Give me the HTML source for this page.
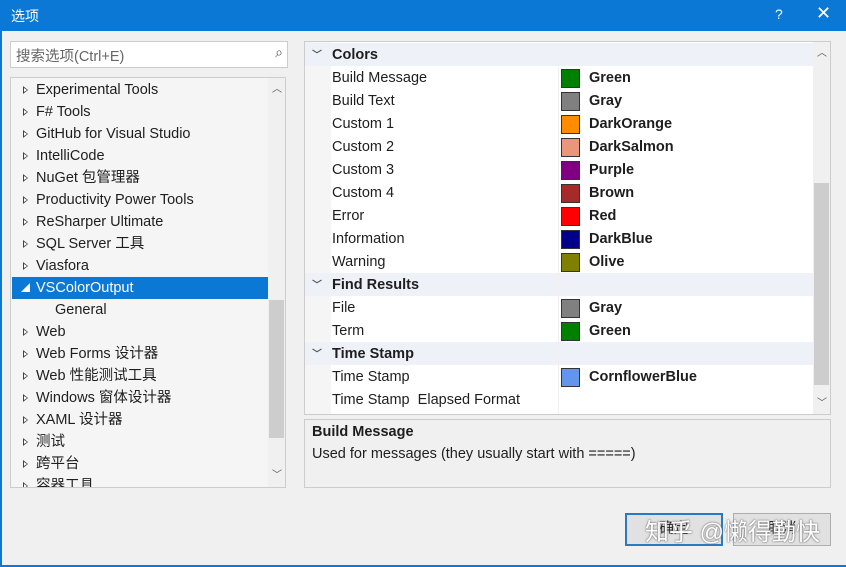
<!DOCTYPE html><html><head><meta charset="utf-8"><style>
*{margin:0;padding:0;box-sizing:border-box}
body{width:846px;height:567px;background:#f0f0f0;font-family:"Segoe UI","Liberation Sans","Noto Sans CJK SC",sans-serif;font-size:14.5px;color:#1e1e1e;position:relative;overflow:hidden}
.a{position:absolute}
#title{left:0;top:0;width:846px;height:31px;background:#0b78d6;color:#fff}
.row{position:absolute;height:22px;line-height:22px;white-space:nowrap}
.tri{display:inline-block;width:0;height:0;border-left:5px solid #444;border-top:4px solid transparent;border-bottom:4px solid transparent;position:absolute;left:12px;top:7px}
.tri::after{content:"";position:absolute;left:-4px;top:-2.5px;border-left:3px solid #fff;border-top:2.5px solid transparent;border-bottom:2.5px solid transparent}
.g{position:absolute;left:0;width:508px;height:23px;line-height:25px;white-space:nowrap}
.cat{background:#eef1f7;font-weight:bold}
.sw{position:absolute;left:256px;top:3px;width:19px;height:19px;border:1px solid #333}
.v{position:absolute;left:284px;font-weight:bold}
.l{position:absolute;left:27px}
.chev{position:absolute;left:7px;top:0;font-size:10px;color:#555}
</style></head><body>
<div class="a" style="left:0;top:0;width:2px;height:567px;background:#0b78d6"></div>
<div class="a" id="title"><span class="a" style="left:11px;top:6px;font-size:14px">选项</span><span class="a" style="left:775px;top:6px;font-size:14px">?</span><span class="a" style="left:816px;top:3px;font-size:18px">✕</span></div>
<div class="a" style="left:10px;top:41px;width:278px;height:27px;background:#fff;border:1px solid #ccc"><span class="a" style="left:5px;top:3px;color:#666">搜索选项(Ctrl+E)</span><span class="a" style="right:4px;top:2px;color:#555;font-size:14px">&#x2315;</span></div>
<div class="a" style="left:10px;top:77px;width:276px;height:411px;background:#f5f5f5;border:1px solid #ccc;overflow:hidden">
<div class="a" style="left:257px;top:0;width:17px;height:409px;background:#f0f0f0"></div>
<div class="a" style="left:258px;top:222px;width:15px;height:138px;background:#cdcdcd"></div>
<div class="a" style="left:261px;top:2px;font-size:10px;color:#555">︿</div>
<div class="a" style="left:261px;top:388px;font-size:10px;color:#555">﹀</div>
<div class="a" style="left:1px;top:199px;width:256px;height:22px;background:#0b78d6"></div>
<div class="row" style="top:1px;left:0"><i class="tri"></i><span style="margin-left:25px">Experimental Tools</span></div>
<div class="row" style="top:23px"><i class="tri"></i><span style="margin-left:25px">F# Tools</span></div>
<div class="row" style="top:45px"><i class="tri"></i><span style="margin-left:25px">GitHub for Visual Studio</span></div>
<div class="row" style="top:67px"><i class="tri"></i><span style="margin-left:25px">IntelliCode</span></div>
<div class="row" style="top:89px"><i class="tri"></i><span style="margin-left:25px">NuGet 包管理器</span></div>
<div class="row" style="top:111px"><i class="tri"></i><span style="margin-left:25px">Productivity Power Tools</span></div>
<div class="row" style="top:133px"><i class="tri"></i><span style="margin-left:25px">ReSharper Ultimate</span></div>
<div class="row" style="top:155px"><i class="tri"></i><span style="margin-left:25px">SQL Server 工具</span></div>
<div class="row" style="top:177px"><i class="tri"></i><span style="margin-left:25px">Viasfora</span></div>
<div class="row" style="top:199px;color:#fff"><span style="position:absolute;left:10px;font-size:9px">◢</span><span style="margin-left:25px">VSColorOutput</span></div>
<div class="row" style="top:221px"><span style="margin-left:44px">General</span></div>
<div class="row" style="top:243px"><i class="tri"></i><span style="margin-left:25px">Web</span></div>
<div class="row" style="top:265px"><i class="tri"></i><span style="margin-left:25px">Web Forms 设计器</span></div>
<div class="row" style="top:287px"><i class="tri"></i><span style="margin-left:25px">Web 性能测试工具</span></div>
<div class="row" style="top:309px"><i class="tri"></i><span style="margin-left:25px">Windows 窗体设计器</span></div>
<div class="row" style="top:331px"><i class="tri"></i><span style="margin-left:25px">XAML 设计器</span></div>
<div class="row" style="top:353px"><i class="tri"></i><span style="margin-left:25px">测试</span></div>
<div class="row" style="top:375px"><i class="tri"></i><span style="margin-left:25px">跨平台</span></div>
<div class="row" style="top:397px"><i class="tri"></i><span style="margin-left:25px">容器工具</span></div>
</div>
<div class="a" style="left:304px;top:41px;width:527px;height:374px;background:#fff;border:1px solid #ccc;overflow:hidden">
<div class="a" style="left:0;top:0;width:26px;height:372px;background:#f5f5f5"></div>
<div class="a" style="left:508px;top:0;width:17px;height:372px;background:#f0f0f0"></div>
<div class="a" style="left:509px;top:141px;width:15px;height:202px;background:#cdcdcd"></div>
<div class="a" style="left:512px;top:2px;font-size:10px;color:#555">︿</div>
<div class="a" style="left:512px;top:352px;font-size:10px;color:#555">﹀</div>
<div class="a" style="left:0;top:0;width:508px">
<div class="g cat" style="top:1px"><span class="chev">﹀</span><span class="l">Colors</span></div>
<div class="g" style="top:24px"><span class="l">Build Message</span><i class="sw" style="background:#008000"></i><span class="v">Green</span></div>
<div class="g" style="top:47px"><span class="l">Build Text</span><i class="sw" style="background:#808080"></i><span class="v">Gray</span></div>
<div class="g" style="top:70px"><span class="l">Custom 1</span><i class="sw" style="background:#ff8c00"></i><span class="v">DarkOrange</span></div>
<div class="g" style="top:93px"><span class="l">Custom 2</span><i class="sw" style="background:#e9967a"></i><span class="v">DarkSalmon</span></div>
<div class="g" style="top:116px"><span class="l">Custom 3</span><i class="sw" style="background:#800080"></i><span class="v">Purple</span></div>
<div class="g" style="top:139px"><span class="l">Custom 4</span><i class="sw" style="background:#a52a2a"></i><span class="v">Brown</span></div>
<div class="g" style="top:162px"><span class="l">Error</span><i class="sw" style="background:#ff0000"></i><span class="v">Red</span></div>
<div class="g" style="top:185px"><span class="l">Information</span><i class="sw" style="background:#00008b"></i><span class="v">DarkBlue</span></div>
<div class="g" style="top:208px"><span class="l">Warning</span><i class="sw" style="background:#808000"></i><span class="v">Olive</span></div>
<div class="g cat" style="top:231px"><span class="chev">﹀</span><span class="l">Find Results</span></div>
<div class="g" style="top:254px"><span class="l">File</span><i class="sw" style="background:#808080"></i><span class="v">Gray</span></div>
<div class="g" style="top:277px"><span class="l">Term</span><i class="sw" style="background:#008000"></i><span class="v">Green</span></div>
<div class="g cat" style="top:300px"><span class="chev">﹀</span><span class="l">Time Stamp</span></div>
<div class="g" style="top:323px"><span class="l">Time Stamp</span><i class="sw" style="background:#6495ed"></i><span class="v">CornflowerBlue</span></div>
<div class="g" style="top:346px"><span class="l">Time Stamp&nbsp; Elapsed Format</span></div>
</div>
<div class="a" style="left:253px;top:24px;width:1px;height:348px;background:#f0f0f0"></div>
</div>
<div class="a" style="left:304px;top:419px;width:527px;height:69px;border:1px solid #ccc;background:#f0f0f0">
<div class="a" style="left:7px;top:4px;font-weight:bold">Build Message</div>
<div class="a" style="left:7px;top:26px">Used for messages (they usually start with =====)</div>
</div>
<div class="a" style="left:625px;top:513px;width:98px;height:33px;border:2px solid #2a7ac0;background:#e1e1e1;text-align:center;line-height:29px">确定</div>
<div class="a" style="left:733px;top:513px;width:98px;height:33px;border:1px solid #adadad;background:#e1e1e1;text-align:center;line-height:31px">取消</div>
<div class="a" style="left:645px;top:512px;font-size:24px;color:#fff;text-shadow:0 0 2px #777,0 0 1px #555">知乎 @懒得勤快</div>
<div class="a" style="left:0;top:565px;width:846px;height:2px;background:#0b78d6"></div>
</body></html>
